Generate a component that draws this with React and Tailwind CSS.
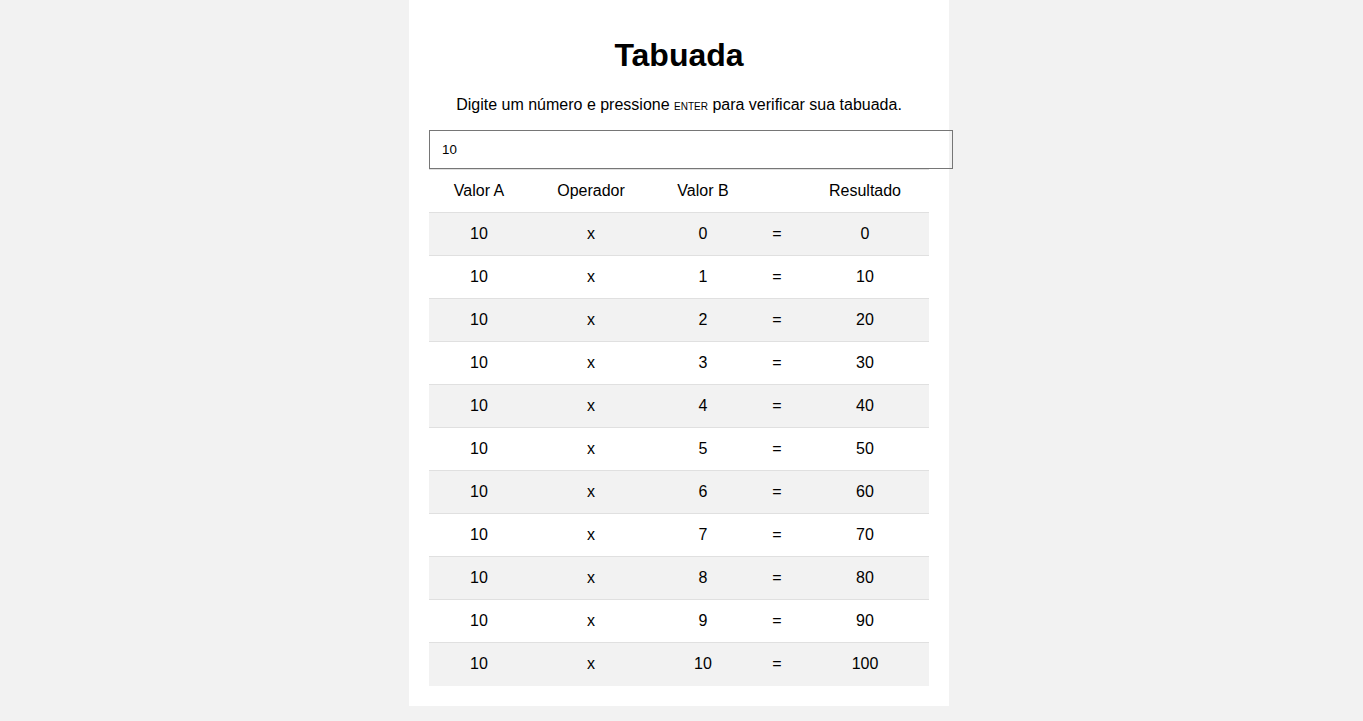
export default function App() {
  const rows = Array.from({ length: 11 }, (_, i) => i);

  return (
    <div className="min-h-screen bg-[#f2f2f2] flex items-start justify-center pr-[5px] font-['Liberation_Sans',Arial,sans-serif] text-black">
      <div className="w-[540px] bg-white px-5 pt-[37px] pb-5">
        <h1 className="text-[32px] leading-[37px] font-bold text-center mb-[22px]">Tabuada</h1>
        <p className="text-base leading-[18px] text-center mb-4">
          Digite um número e pressione <span className="text-[10px] leading-none uppercase">enter</span> para verificar sua tabuada.
        </p>
        <input
          type="text"
          defaultValue="10"
          className="block w-[524px] h-[39px] border border-[#767676] px-3 text-[13.33px] outline-none"
        />
        <table className="w-[500px] border-collapse table-fixed">
          <colgroup>
            <col className="w-[100px]" />
            <col className="w-[124px]" />
            <col className="w-[100px]" />
            <col className="w-[48px]" />
            <col className="w-[128px]" />
          </colgroup>
          <thead>
            <tr className="border-t border-[#e0e0e0] h-[43px]">
              <th className="font-normal text-center">Valor A</th>
              <th className="font-normal text-center">Operador</th>
              <th className="font-normal text-center">Valor B</th>
              <th className="font-normal text-center"></th>
              <th className="font-normal text-center">Resultado</th>
            </tr>
          </thead>
          <tbody>
            {rows.map((n) => (
              <tr
                key={n}
                className={`border-t border-[#e0e0e0] h-[43px] ${n % 2 === 0 ? "bg-[#f2f2f2]" : "bg-white"}`}
              >
                <td className="text-center">10</td>
                <td className="text-center">x</td>
                <td className="text-center">{n}</td>
                <td className="text-center">=</td>
                <td className="text-center">{10 * n}</td>
              </tr>
            ))}
          </tbody>
        </table>
      </div>
    </div>
  );
}
